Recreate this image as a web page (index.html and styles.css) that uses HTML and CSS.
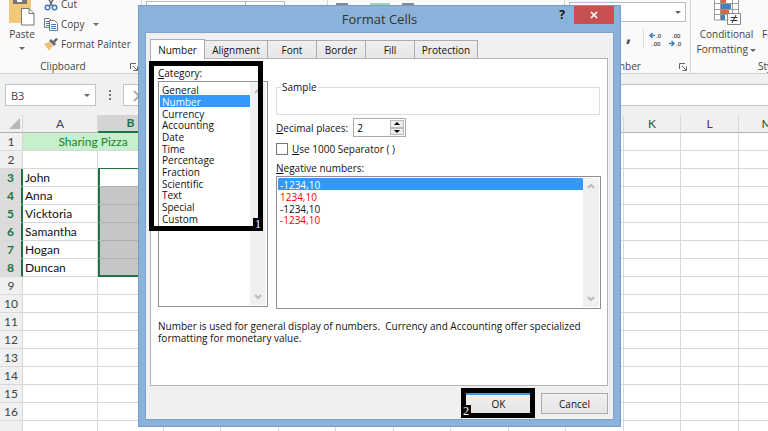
FILE: index.html
```
<!DOCTYPE html>
<html lang="en">
<head>
    <meta charset="UTF-8">
    <meta name="viewport" content="width=device-width, initial-scale=1.0">
    <title>Format Cells</title>
    <link rel="stylesheet" href="styles.css">
</head>
<body>
    <div class="ribbon">
        <section class="group clipboard">
            <div class="group-body">
                <button class="big-button">
                    <svg width="26" height="26" viewBox="0 0 26 26">
                        <path d="M0 0h22v23H0z" fill="#f0c878"/>
                        <path d="M4 0h14v4H4z" fill="#777"/>
                        <path d="M8 0h5v2H8z" fill="#fff"/>
                        <path d="M12.500 8.500h7.500l5 5v11.500h-12.500z" fill="#fff" stroke="#777"/>
                        <path d="M20 8.500v5h5" fill="none" stroke="#777"/>
                    </svg>
                    <span>Paste</span>
                    <span class="arrow"></span>
                </button>
                <div class="tools">
                    <button class="tool">
                        <svg width="14" height="18" viewBox="0 0 14 18">
                            <path d="M3 1l6 11M11 1L5 12" stroke="#666" stroke-width="1.500" fill="none"/>
                            <circle cx="3.500" cy="12.500" r="2.300" fill="none" stroke="#4379b5" stroke-width="1.400"/>
                            <circle cx="10.500" cy="12.500" r="2.300" fill="none" stroke="#4379b5" stroke-width="1.400"/>
                        </svg>
                        Cut
                    </button>
                    <button class="tool">
                        <svg width="14" height="14" viewBox="0 0 14 14">
                            <path d="M.5 1.500h5l2 2v7h-7z" fill="#fff" stroke="#777"/>
                            <path d="M2 4.500h3M2 6.500h3M2 8.500h3" stroke="#4379b5"/>
                            <path d="M5.500 3.500h5l3 3v7h-8z" fill="#fff" stroke="#777"/>
                            <path d="M7 7.500h5M7 9.500h5M7 11.500h5" stroke="#4379b5"/>
                        </svg>
                        Copy
                        <span class="arrow copy-arrow"></span>
                    </button>
                    <button class="tool">
                        <svg width="14" height="14" viewBox="0 0 14 14">
                            <path d="M0 7l5-2 4 4-4 4.500z" fill="#eec077"/>
                            <path d="M5 4l2-2 5 5-2 2z" fill="#666"/>
                            <path d="M9 4l3-3 2 1-3 4z" fill="#666"/>
                        </svg>
                        Format Painter
                    </button>
                </div>
            </div>
            <div class="group-name">Clipboard
                <svg class="launcher" width="8" height="8" viewBox="0 0 8 8"><path d="M.5 6V.5H6M3 3l4 4M7.500 3.500v4h-4" fill="none" stroke="#666"/></svg>
            </div>
        </section>
        <section class="group font">
            <div class="group-body">
                <div class="font-box"></div>
                <div class="size-box"></div>
            </div>
        </section>
        <section class="group alignment">
            <div class="group-body">
                <span class="align-bar"></span>
                <span class="align-active"></span>
                <span class="align-bar"></span>
            </div>
        </section>
        <section class="group number">
            <div class="group-body">
                <div class="number-format"><span class="arrow"></span></div>
                <div class="number-tools">
                    <button class="comma">,</button>
                    <button class="decimals">
                        <svg width="15" height="16" viewBox="0 0 15 16">
                            <path d="M1 4.500h5M3.500 2L1 4.500 3.500 7" fill="none" stroke="#3c7fc0" stroke-width="1.500"/>
                            <text x="7" y="7">.0</text><text x="3" y="15">.00</text>
                        </svg>
                    </button>
                    <button class="decimals">
                        <svg width="15" height="16" viewBox="0 0 15 16">
                            <text x="3" y="7">.00</text><text x="7" y="15">.0</text>
                            <path d="M0 12.500h5M2.500 10L5 12.500 2.500 15" fill="none" stroke="#3c7fc0" stroke-width="1.500"/>
                        </svg>
                    </button>
                </div>
            </div>
            <div class="group-name">Number
                <svg class="launcher" width="8" height="8" viewBox="0 0 8 8"><path d="M.5 6V.5H6M3 3l4 4M7.500 3.500v4h-4" fill="none" stroke="#666"/></svg>
            </div>
        </section>
        <section class="group styles">
            <div class="group-body">
                <button class="big-button wide">
                    <svg width="28" height="26" viewBox="0 0 28 26">
                        <path d="M1.500 0v20h24V0M1.500 3.500h24M1.500 9.500h24M1.500 14.500h24M7.500 0v20M19.500 0v20" fill="#fff" stroke="#999"/>
                        <path d="M8 0h5v3H8zM8 10h8v4H8z" fill="#dc6440"/>
                        <path d="M8 4h10v5H8zM8 15h4v5H8z" fill="#4680b8"/>
                        <path d="M14.500 13.500h13v11h-13z" fill="#fff" stroke="#888"/>
                        <path d="M17.500 17.500h7M17.500 20.500h7M23 15l-4 8" stroke="#333" fill="none"/>
                    </svg>
                    <span>Conditional</span>
                    <span>Formatting <span class="arrow"></span></span>
                </button>
                <button class="big-button">
                    <svg width="28" height="26" viewBox="0 0 28 26"></svg>
                    <span>Format as</span>
                    <span>Table <span class="arrow"></span></span>
                </button>
            </div>
            <div class="group-name">Styles</div>
        </section>
    </div>

    <div class="formula-bar">
        <div class="name-box">B3 <span class="arrow"></span></div>
        <div class="dots"><i></i><i></i><i></i></div>
        <div class="formula-buttons">
            <svg width="12" height="12" viewBox="0 0 12 12"><path d="M1 1l10 10M11 1L1 11" stroke="#aaa" stroke-width="2"/></svg>
        </div>
        <div class="formula-input"></div>
    </div>

    <table class="sheet">
        <colgroup>
            <col class="col-head"><col class="col-a"><col class="col-b">
            <col class="col"><col class="col-wide"><col class="col"><col class="col-wide">
            <col class="col"><col class="col-wide"><col class="col"><col class="col-wide">
            <col class="col"><col class="col-wide"><col class="col">
        </colgroup>
        <thead>
            <tr>
                <th class="corner"><svg width="11" height="11" viewBox="0 0 11 11"><path d="M11 0v11H0z" fill="#b8b8b8"/></svg></th>
                <th>A</th><th class="picked">B</th><th>C</th><th>D</th><th>E</th><th>F</th><th>G</th>
                <th>H</th><th>I</th><th>J</th><th>K</th><th>L</th><th>M</th>
            </tr>
        </thead>
        <tbody>
            <tr><th>1</th><td class="title" colspan="2">Sharing Pizza</td><td></td><td></td><td></td><td></td><td></td><td></td><td></td><td></td><td></td><td></td><td></td></tr>
            <tr class="above"><th>2</th><td></td><td></td><td></td><td></td><td></td><td></td><td></td><td></td><td></td><td></td><td></td><td></td><td></td></tr>
            <tr class="picked-row first"><th>3</th><td>John</td><td></td><td></td><td></td><td></td><td></td><td></td><td></td><td></td><td></td><td></td><td></td><td></td></tr>
            <tr class="picked-row"><th>4</th><td>Anna</td><td></td><td></td><td></td><td></td><td></td><td></td><td></td><td></td><td></td><td></td><td></td><td></td></tr>
            <tr class="picked-row"><th>5</th><td>Vicktoria</td><td></td><td></td><td></td><td></td><td></td><td></td><td></td><td></td><td></td><td></td><td></td><td></td></tr>
            <tr class="picked-row"><th>6</th><td>Samantha</td><td></td><td></td><td></td><td></td><td></td><td></td><td></td><td></td><td></td><td></td><td></td><td></td></tr>
            <tr class="picked-row"><th>7</th><td>Hogan</td><td></td><td></td><td></td><td></td><td></td><td></td><td></td><td></td><td></td><td></td><td></td><td></td></tr>
            <tr class="picked-row end"><th>8</th><td>Duncan</td><td></td><td></td><td></td><td></td><td></td><td></td><td></td><td></td><td></td><td></td><td></td><td></td></tr>
            <tr><th>9</th><td></td><td></td><td></td><td></td><td></td><td></td><td></td><td></td><td></td><td></td><td></td><td></td><td></td></tr>
            <tr><th>10</th><td></td><td></td><td></td><td></td><td></td><td></td><td></td><td></td><td></td><td></td><td></td><td></td><td></td></tr>
            <tr><th>11</th><td></td><td></td><td></td><td></td><td></td><td></td><td></td><td></td><td></td><td></td><td></td><td></td><td></td></tr>
            <tr><th>12</th><td></td><td></td><td></td><td></td><td></td><td></td><td></td><td></td><td></td><td></td><td></td><td></td><td></td></tr>
            <tr><th>13</th><td></td><td></td><td></td><td></td><td></td><td></td><td></td><td></td><td></td><td></td><td></td><td></td><td></td></tr>
            <tr><th>14</th><td></td><td></td><td></td><td></td><td></td><td></td><td></td><td></td><td></td><td></td><td></td><td></td><td></td></tr>
            <tr><th>15</th><td></td><td></td><td></td><td></td><td></td><td></td><td></td><td></td><td></td><td></td><td></td><td></td><td></td></tr>
            <tr><th>16</th><td></td><td></td><td></td><td></td><td></td><td></td><td></td><td></td><td></td><td></td><td></td><td></td><td></td></tr>
            <tr><th></th><td></td><td></td><td></td><td></td><td></td><td></td><td></td><td></td><td></td><td></td><td></td><td></td><td></td></tr>
        </tbody>
    </table>

    <div class="dialog" role="dialog" aria-labelledby="dialog-title">
        <header class="titlebar">
            <h1 id="dialog-title">Format Cells</h1>
            <div class="window-buttons">
                <button class="help">?</button>
                <button class="close" aria-label="Close">
                    <svg width="8" height="8" viewBox="0 0 8 8"><path d="M1 1l6 6M7 1L1 7" stroke="#fff" stroke-width="1.700"/></svg>
                </button>
            </div>
        </header>
        <div class="dialog-body">
            <div class="tabs" role="tablist">
                <button class="tab active" role="tab">Number</button>
                <button class="tab wide" role="tab">Alignment</button>
                <button class="tab" role="tab">Font</button>
                <button class="tab" role="tab">Border</button>
                <button class="tab" role="tab">Fill</button>
                <button class="tab wide" role="tab">Protection</button>
            </div>
            <div class="panel">
                <div class="panel-columns">
                    <div class="category">
                        <label for="category"><u>C</u>ategory:</label>
                        <div class="listbox">
                            <select id="category" size="12">
                                <option>General</option>
                                <option selected>Number</option>
                                <option>Currency</option>
                                <option>Accounting</option>
                                <option>Date</option>
                                <option>Time</option>
                                <option>Percentage</option>
                                <option>Fraction</option>
                                <option>Scientific</option>
                                <option>Text</option>
                                <option>Special</option>
                                <option>Custom</option>
                            </select>
                            <div class="scrollbar">
                                <svg width="8" height="6" viewBox="0 0 8 6"><path d="M1 5l3-3 3 3" fill="none" stroke="#bbb" stroke-width="2"/></svg>
                                <svg width="8" height="6" viewBox="0 0 8 6"><path d="M1 1l3 3 3-3" fill="none" stroke="#bbb" stroke-width="2"/></svg>
                            </div>
                        </div>
                        <div class="callout callout-category"><span>1</span></div>
                    </div>
                    <div class="options">
                        <fieldset class="sample"><legend>Sample</legend></fieldset>
                        <div class="decimal-row">
                            <label for="places"><u>D</u>ecimal places:</label>
                            <div class="spinner">
                                <input id="places" type="text" value="2">
                                <div class="spin-buttons">
                                    <button aria-label="More"><svg width="6" height="3" viewBox="0 0 6 3"><path d="M0 3l3-3 3 3z"/></svg></button>
                                    <button aria-label="Less"><svg width="6" height="3" viewBox="0 0 6 3"><path d="M0 0l3 3 3-3z"/></svg></button>
                                </div>
                            </div>
                        </div>
                        <div class="check-row">
                            <input id="separator" type="checkbox">
                            <label for="separator"><u>U</u>se 1000 Separator ( )</label>
                        </div>
                        <label class="negative-label" for="negative"><u>N</u>egative numbers:</label>
                        <div class="listbox negative">
                            <select id="negative" size="4">
                                <option selected>-1234,10</option>
                                <option class="red">1234,10</option>
                                <option>-1234,10</option>
                                <option class="red">-1234,10</option>
                            </select>
                            <div class="scrollbar">
                                <svg width="8" height="6" viewBox="0 0 8 6"><path d="M1 5l3-3 3 3" fill="none" stroke="#bbb" stroke-width="2"/></svg>
                                <svg width="8" height="6" viewBox="0 0 8 6"><path d="M1 1l3 3 3-3" fill="none" stroke="#bbb" stroke-width="2"/></svg>
                            </div>
                        </div>
                    </div>
                </div>
                <p class="hint">Number is used for general display of numbers.&nbsp; Currency and Accounting offer specialized formatting for monetary value.</p>
            </div>
            <div class="actions">
                <div class="ok-wrap">
                    <button class="action ok">OK</button>
                    <div class="callout callout-ok"><span>2</span></div>
                </div>
                <button class="action">Cancel</button>
            </div>
        </div>
    </div>
</body>
</html>
```
FILE: styles.css
```
* { box-sizing: border-box; }
body {
    margin: 0;
    height: 100vh;
    overflow: hidden;
    position: relative;
    background: #fff;
    color: #444;
    font-family: "Open Sans", "Noto Sans", sans-serif;
    font-size: 10px;
}
button {
    font: inherit;
    color: inherit;
    border: 0;
    padding: 0;
    background: none;
}
svg { display: block; flex: none; }
.arrow {
    display: inline-block;
    border: 3px solid transparent;
    border-top-color: #666;
    border-bottom: 0;
    vertical-align: middle;
}

/* ribbon */
.ribbon {
    display: flex;
    height: 74px;
    overflow: hidden;
    background: #fafafa;
    border-bottom: 1px solid #d0d0d0;
}
.group {
    display: flex;
    flex-direction: column;
    justify-content: space-between;
    flex: none;
    border-right: 1px solid #d4d4d4;
}
.group-body { display: flex; }
.group-name {
    position: relative;
    height: 14px;
    line-height: 14px;
    font-weight: 500;
    text-align: center;
}
.launcher {
    position: absolute;
    right: 3px;
    top: 4px;
}
.clipboard { width: 142px; }
.clipboard .group-name { padding-right: 15px; }
.font { width: 186px; }
.alignment { width: 237px; }
.number { width: 126px; }
.styles { width: 162px; }
.big-button {
    display: flex;
    flex-direction: column;
    align-items: center;
    line-height: 15px;
    white-space: nowrap;
}
.clipboard .big-button { width: 44px; }
.big-button.wide { width: 71px; }
.big-button svg { margin-bottom: 1px; }
.big-button > .arrow { margin-top: 5px; }
.tools { margin-top: -6px; }
.tool {
    display: flex;
    align-items: center;
    gap: 3px;
    height: 20px;
    white-space: nowrap;
}
.copy-arrow { margin-left: 6px; }
.font .group-body { padding-left: 4px; }
.font-box, .size-box {
    width: 100px;
    height: 20px;
    border: 1px solid #bbb;
    background: #fff;
    margin-top: 1px;
}
.size-box { width: 39px; border-left: 0; }
.alignment .group-body {
    gap: 12px;
    padding: 3px 0 0 8px;
}
.align-bar { width: 12px; height: 2px; background: #888; }
.align-active { width: 20px; height: 16px; background: #9fd5b7; margin-left: 10px; }
.number .group-body { flex-direction: column; }
.number-format {
    display: flex;
    align-items: center;
    justify-content: flex-end;
    height: 20px;
    margin: 2px 4px 0;
    padding-right: 4px;
    border: 1px solid #bbb;
    background: #fff;
}
.number-tools {
    display: flex;
    justify-content: flex-end;
    gap: 5px;
    height: 20px;
    margin: 7px 6px 0 0;
}
.comma {
    width: 18px;
    padding-bottom: 8px;
    border-right: 1px solid #ddd;
    font-size: 18px;
    line-height: 8px;
    font-weight: bold;
    text-align: left;
}
.decimals text { font-size: 6px; font-weight: 600; fill: #444; }
.number .group-name { padding-right: 12px; }

/* formula bar */
.formula-bar {
    display: flex;
    height: 41px;
    padding: 10px 0 9px 5px;
    background: #f0f0f0;
    font-size: 11px;
}
.name-box {
    display: flex;
    align-items: center;
    justify-content: space-between;
    width: 91px;
    padding: 0 5px;
    border: 1px solid #c3c3c3;
    background: #fff;
}
.dots {
    display: flex;
    flex-direction: column;
    align-items: center;
    justify-content: center;
    gap: 2px;
    width: 27px;
}
.dots i { width: 2px; height: 2px; background: #777; }
.formula-buttons {
    width: 80px;
    padding: 5px 9px;
    border: 1px solid #c3c3c3;
    background: #fff;
}
.formula-input {
    flex: 1;
    margin-left: 4px;
    border: 1px solid #c3c3c3;
    border-right: 0;
    background: #fff;
}

/* sheet */
.sheet {
    width: 100%;
    table-layout: fixed;
    border-collapse: separate;
    border-spacing: 0;
    font-family: Lato, "Open Sans", sans-serif;
    font-size: 12px;
    line-height: 17px;
    color: #111;
}
.col-head { width: 23px; }
.col-a { width: 75px; }
.col-b { width: 66px; }
.col { width: 57px; }
.col-wide { width: 58px; }
.sheet th, .sheet td {
    height: 18px;
    padding: 0 2px;
    border-right: 1px solid #d8d8d8;
    border-bottom: 1px solid #d8d8d8;
    white-space: nowrap;
    overflow: hidden;
}
.sheet th {
    padding: 0;
    background: #f0f0f0;
    color: #444;
    font-weight: normal;
    text-align: center;
}
.sheet thead th { border-bottom-color: #b0b0b0; }
.sheet .corner svg { margin-left: 9px; }
.sheet .picked {
    background: #d4d4d4;
    color: #217346;
    font-weight: bold;
    line-height: 16px;
    border-bottom: 2px solid #217346;
}
.sheet .title {
    background: #c6efce;
    color: #228022;
    text-align: center;
}
.sheet .picked-row th {
    background: #dcdcdc;
    color: #217346;
    font-weight: bold;
    border-right: 2px solid #217346;
}
.sheet .above td:nth-child(3) { border-bottom: 1px solid #217346; }
.sheet .picked-row td:nth-child(3) {
    background: #c6c6c6;
    border-left: 2px solid #217346;
    border-bottom-color: #b0b0b0;
}
.sheet .first td:nth-child(3) { background: #fff; }
.sheet .end td:nth-child(3) { border-bottom: 2px solid #217346; }

/* dialog */
.dialog {
    position: absolute;
    top: 5px;
    left: 138px;
    right: 147px;
    padding: 0 6px 6px;
    border: 1px solid #759fca;
    background: #8ab2da;
    color: #111;
    font-weight: 500;
}
.titlebar {
    position: relative;
    height: 26px;
}
.titlebar h1 {
    margin: 0;
    font-size: 13px;
    line-height: 26px;
    font-weight: normal;
    color: #333;
    text-align: center;
}
.window-buttons {
    position: absolute;
    top: 0;
    right: 0;
    display: flex;
}
.help {
    width: 24px;
    font-size: 12px;
    line-height: 18px;
    font-weight: bold;
}
.close {
    display: flex;
    align-items: center;
    justify-content: center;
    width: 40px;
    height: 18px;
    background: #c75050;
}
.dialog-body {
    padding: 6px 5px 5px 4px;
    border: 1px solid #7ba4cd;
    background: #f0f0f0;
}
.tabs {
    display: flex;
    align-items: flex-end;
}
.tab {
    width: 49px;
    height: 18px;
    border: 1px solid #acacac;
    border-width: 1px 1px 0 0;
    background: linear-gradient(#f0f0f0, #e5e5e5);
}
.tab.wide { width: 63px; }
.tab.active {
    position: relative;
    width: 55px;
    height: 20px;
    margin-bottom: -1px;
    border-left-width: 1px;
    background: #fff;
}
.panel {
    min-height: 328px;
    padding: 7px 6px 0 7px;
    border: 1px solid #b4b4b4;
    background: #fff;
}
.panel-columns {
    display: flex;
    gap: 8px;
}
.category {
    position: relative;
    width: 110px;
}
.category label, .negative-label {
    display: block;
    height: 15px;
    line-height: 14px;
}
.listbox {
    display: flex;
    height: 226px;
    padding: 1px;
    border: 1px solid #8a8f99;
    background: #fff;
}
.listbox select {
    flex: 1;
    min-width: 0;
    border: 0;
    padding: 0;
    outline: 0;
    background: #fff;
    color: #111;
    font: inherit;
    overflow: hidden;
}
.listbox option {
    height: 12px;
    min-height: 0;
    padding: 0 2px;
    line-height: 12px;
}
.listbox option:nth-child(3n) { height: 11px; }
.listbox option:checked {
    background: #3399ff linear-gradient(#3399ff, #3399ff);
    color: #fff;
}
.listbox .red { color: #f00; }
.scrollbar {
    display: flex;
    flex-direction: column;
    align-items: center;
    justify-content: space-between;
    width: 16px;
    padding: 5px 0;
    background: #f0f0f0;
}
.options { flex: 1; }
.sample {
    height: 34px;
    margin: 15px 1px 3px 0;
    padding: 0 4px;
    border: 1px solid #ddd;
}
.sample legend {
    padding: 0 1px;
    line-height: 12px;
}
.decimal-row {
    display: flex;
    align-items: center;
    gap: 5px;
    height: 19px;
}
.decimal-row label { white-space: nowrap; }
.spinner {
    display: flex;
    width: 53px;
    height: 19px;
    padding: 1px;
    border: 1px solid #acacac;
    background: #fff;
}
.spinner input {
    flex: 1;
    min-width: 0;
    border: 0;
    padding: 0 2px;
    font: inherit;
}
.spin-buttons {
    display: flex;
    flex-direction: column;
    width: 14px;
}
.spin-buttons button {
    display: flex;
    flex: 1;
    align-items: center;
    justify-content: center;
    border: 1px solid #bbb;
    background: #eee;
}
.check-row {
    display: flex;
    align-items: center;
    gap: 4px;
    height: 24px;
}
.check-row input {
    appearance: none;
    width: 12px;
    height: 12px;
    margin: 0;
    border: 1px solid #777;
    background: #fff;
}
.negative { height: 133px; }
.hint {
    margin: 11px 0 0;
    line-height: 12px;
}
.actions {
    display: flex;
    justify-content: flex-end;
    gap: 9px;
    padding-top: 7px;
}
.ok-wrap { position: relative; }
.action {
    display: block;
    width: 67px;
    height: 21px;
    border: 1px solid #acacac;
    background: linear-gradient(#f0f0f0, #e5e5e5);
}
.ok {
    border-color: #3399ff;
    border-top-width: 2px;
}

/* numbered black frames over the dialog */
.callout {
    position: absolute;
    border: 5px solid #000;
    pointer-events: none;
}
.callout span {
    position: absolute;
    right: -5px;
    bottom: -5px;
    width: 10px;
    height: 13px;
    background: #000;
    color: #fff;
    font-family: "Liberation Serif", serif;
    font-size: 12px;
    line-height: 12px;
    text-align: center;
}
.callout-category {
    top: -5px;
    left: -9px;
    width: 114px;
    height: 170px;
}
.callout-ok { inset: -5px -3px -4px -4px; }
.callout-ok span { right: auto; left: -5px; }
```
